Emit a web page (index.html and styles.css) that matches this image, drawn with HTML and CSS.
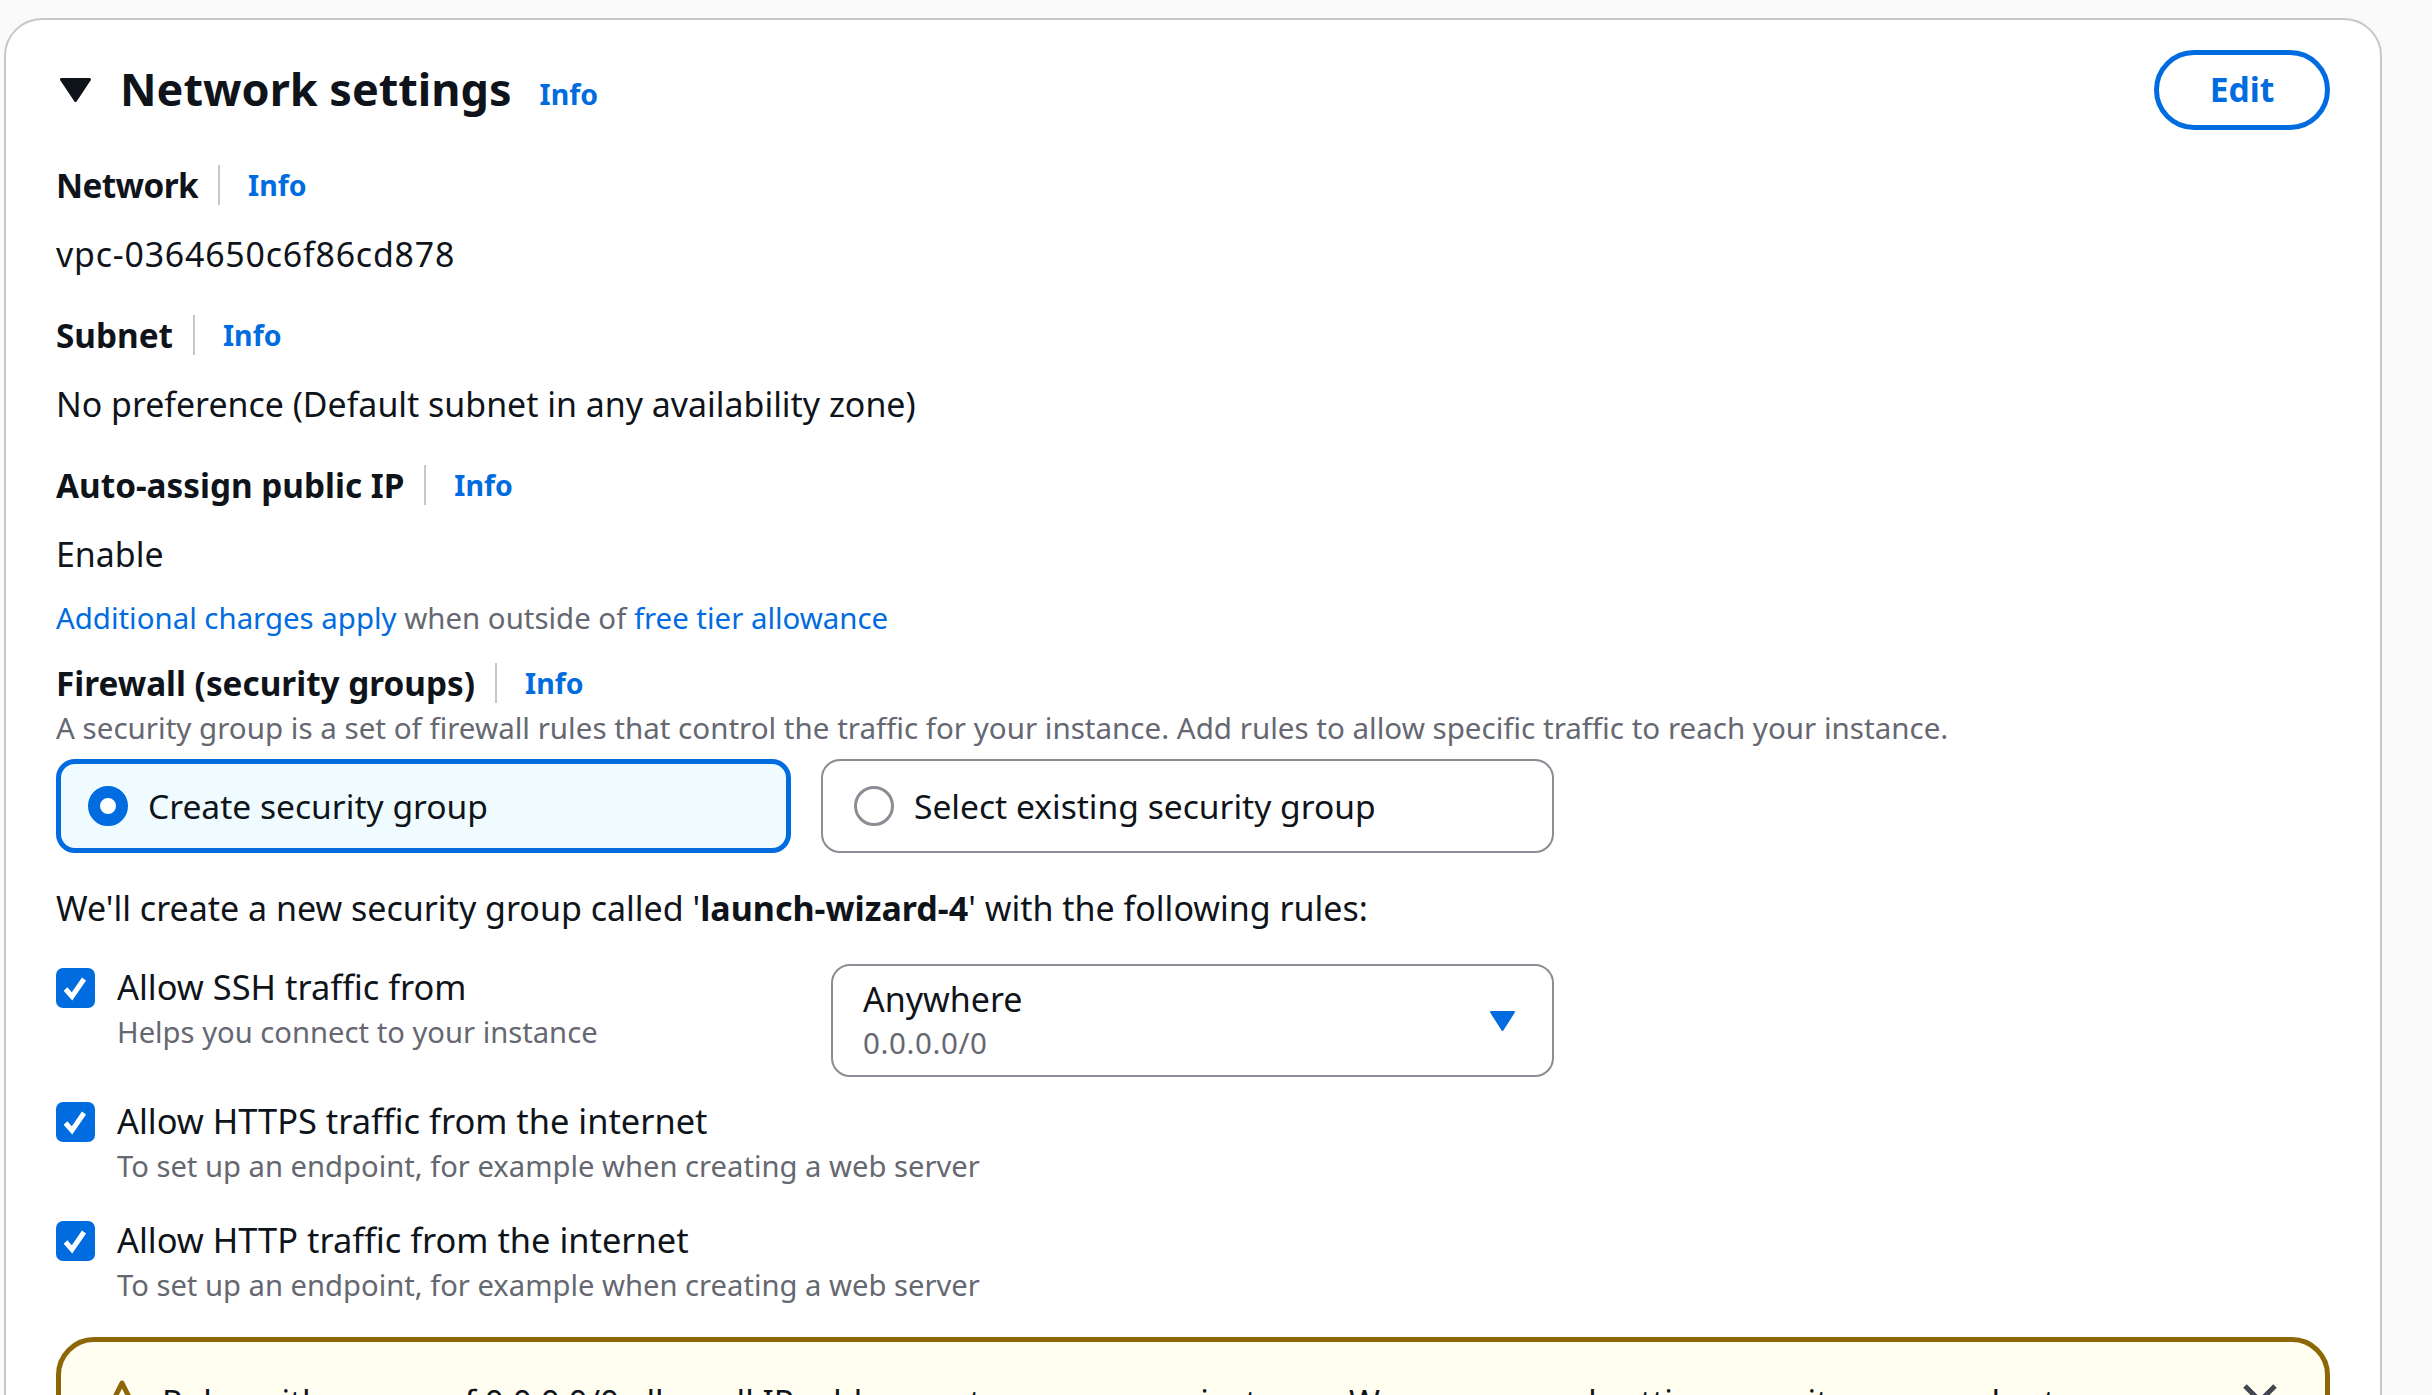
FILE: index.html
```html
<!DOCTYPE html>
<html lang="en">
<head>
<meta charset="utf-8">
<title>Network settings</title>
<link rel="stylesheet" href="styles.css">
</head>
<body>
<section class="card">
  <header class="card-head">
    <svg class="caret" width="31" height="24" viewBox="0 0 31 24"><path d="M1.500 1.500h28L15.500 22.500z" fill="#0f141a" stroke="#0f141a" stroke-width="3" stroke-linejoin="round"/></svg>
    <h2 class="title">Network settings</h2>
    <a class="info info-title">Info</a>
    <button class="edit">Edit</button>
  </header>
  <div class="field field-first"><div class="label-row"><span class="label label-net">Network</span><a class="info">Info</a></div><p class="value value-id">vpc-0364650c6f86cd878</p></div>
  <div class="field"><div class="label-row"><span class="label">Subnet</span><a class="info">Info</a></div><p class="value">No preference (Default subnet in any availability zone)</p></div>
  <div class="field"><div class="label-row"><span class="label">Auto-assign public IP</span><a class="info">Info</a></div><p class="value">Enable</p></div>
  <p class="charges"><a class="link">Additional charges apply</a> when outside of <a class="link">free tier allowance</a></p>
  <div class="label-row fw-row"><span class="label">Firewall (security groups)</span><a class="info">Info</a></div>
  <p class="hint">A security group is a set of firewall rules that control the traffic for your instance. Add rules to allow specific traffic to reach your instance.</p>
  <div class="tiles">
    <div class="tile tile-on"><span class="radio radio-on"></span><span>Create security group</span></div>
    <div class="tile tile-off"><span class="radio"></span><span>Select existing security group</span></div>
  </div>
  <p class="intro">We'll create a new security group called '<b>launch-wizard-4</b>' with the following rules:</p>
  <div class="rule-ssh">
    <div class="check-row ssh-check">
      <span class="check"><svg width="39" height="40" viewBox="0 0 39 40"><path d="M9.500 21l6.500 7.500L28 11" fill="none" stroke="#fff" stroke-width="5"/></svg></span>
      <div><div class="check-label">Allow SSH traffic from</div><div class="check-desc">Helps you connect to your instance</div></div>
    </div>
    <div class="select">
      <div><div class="sel-main">Anywhere</div><div class="sel-sub">0.0.0.0/0</div></div>
      <svg width="25" height="20" viewBox="0 0 25 20"><path d="M1 1h23L12.500 19z" fill="#006ce0" stroke="#006ce0" stroke-width="2" stroke-linejoin="round"/></svg>
    </div>
  </div>
  <div class="check-row rule-https">
    <span class="check"><svg width="39" height="40" viewBox="0 0 39 40"><path d="M9.500 21l6.500 7.500L28 11" fill="none" stroke="#fff" stroke-width="5"/></svg></span>
    <div><div class="check-label">Allow HTTPS traffic from the internet</div><div class="check-desc">To set up an endpoint, for example when creating a web server</div></div>
  </div>
  <div class="check-row rule-http">
    <span class="check"><svg width="39" height="40" viewBox="0 0 39 40"><path d="M9.500 21l6.500 7.500L28 11" fill="none" stroke="#fff" stroke-width="5"/></svg></span>
    <div><div class="check-label">Allow HTTP traffic from the internet</div><div class="check-desc">To set up an endpoint, for example when creating a web server</div></div>
  </div>
  <div class="alert">
    <svg class="alert-icon" width="40" height="40" viewBox="0 0 40 40"><path d="M20 4L4 36h32z" fill="none" stroke="#8d6605" stroke-width="5" stroke-linejoin="round"/></svg>
    <p class="alert-text">Rules with source of 0.0.0.0/0 allow all IP addresses to access your instance. We recommend setting security group rules to</p>
    <svg class="alert-x" width="34" height="34" viewBox="0 0 34 34"><path d="M2 2l30 30M32 2L2 32" stroke="#424650" stroke-width="5"/></svg>
  </div>
</section>
</body>
</html>
```
FILE: styles.css
```css
html, body { margin: 0; height: 100%; overflow: hidden; }
body { background: #fafafa; color: #0f141a; font-family: "Noto Sans", sans-serif; font-size: 34px; line-height: 48px; padding: 18px 50px 0 4px; box-sizing: border-box; }
p { margin: 0; }
.card { background: #fff; border: 2px solid #c6c6cd; border-radius: 38px; padding: 30px 50px 0; height: 1500px; box-sizing: border-box; }
.card-head { display: flex; align-items: center; height: 80px; }
.caret { margin-right: 29px; margin-left: 4px; }
.title { margin: 0 0 2px; font-size: 45px; line-height: 60px; font-weight: 700; }
.info { color: #006ce0; font-weight: 700; font-size: 28.500px; }
.info-title { margin-left: 28px; padding-top: 8px; }
.edit { margin-left: auto; width: 176px; height: 80px; border: 5px solid #006ce0; border-radius: 40px; background: #fff; color: #006ce0; font: 700 33.600px "Noto Sans", sans-serif; padding: 0 0 2px; }
.field { margin-top: 37px; }
.field-first { margin-top: 35px; }
.label-row { display: flex; align-items: center; height: 40px; }
.label { font-weight: 700; font-size: 33.300px; padding-right: 20px; border-right: 2px solid #c6c6cd; height: 40px; line-height: 40px; }
.label-net { letter-spacing: -0.6px; }
.label + .info { margin-left: 28px; }
.value { margin-top: 25px; font-size: 33.900px; }
.value-id { letter-spacing: 0.8px; }
.charges { margin-top: 20px; color: #656871; font-size: 29.400px; line-height: 40px; }
.link { color: #006ce0; }
.fw-row { margin-top: 25px; }
.hint { color: #656871; font-size: 29.550px; line-height: 40px; margin-top: 5px; }
.tiles { display: flex; gap: 30px; margin-top: 11px; font-size: 33.600px; }
.tile { width: 733px; height: 94px; box-sizing: border-box; border: 2px solid #8c8c94; border-radius: 19px; display: flex; align-items: center; gap: 20px; }
.tile-off { padding-left: 31px; }
.tile-on { width: 735px; border: 5px solid #006ce0; background: #f0fbff; padding-left: 27px; }
.radio { width: 40px; height: 40px; box-sizing: border-box; border-radius: 50%; border: 3px solid #8c8c94; background: #fff; flex: none; }
.radio-on { border: 12px solid #006ce0; }
.intro { margin-top: 31px; }
.rule-ssh { display: flex; margin-top: 36px; }
.ssh-check { width: 775px; flex: none; }
.check-row { display: flex; gap: 22px; }
.check { width: 39px; height: 40px; background: #006ce0; border-radius: 7px; flex: none; display: block; }
.check svg { display: block; }
.check-label { line-height: 38px; font-size: 34.400px; }
.check-desc { color: #656871; font-size: 29.200px; line-height: 40px; margin-top: 6px; }
.select { width: 723px; height: 113px; box-sizing: border-box; border: 2px solid #8c8c94; border-radius: 19px; display: flex; align-items: center; justify-content: space-between; padding: 0 37px 0 30px; margin-top: -4px; }
.sel-main { line-height: 40px; }
.sel-sub { color: #656871; font-size: 29.500px; line-height: 40px; margin-top: 4px; letter-spacing: 0.6px; }
.rule-https { margin-top: 25px; }
.rule-http { margin-top: 35px; }
.alert { margin-top: 32px; height: 200px; box-sizing: border-box; border: 5px solid #8d6605; border-radius: 38px; background: #fffef0; display: flex; gap: 20px; padding: 35px 48px 0 41px; }
.alert-icon { flex: none; margin-top: 2px; }
.alert-text { flex: 1; font-size: 33.300px; }
.alert-x { flex: none; margin-top: 7px; }
```
